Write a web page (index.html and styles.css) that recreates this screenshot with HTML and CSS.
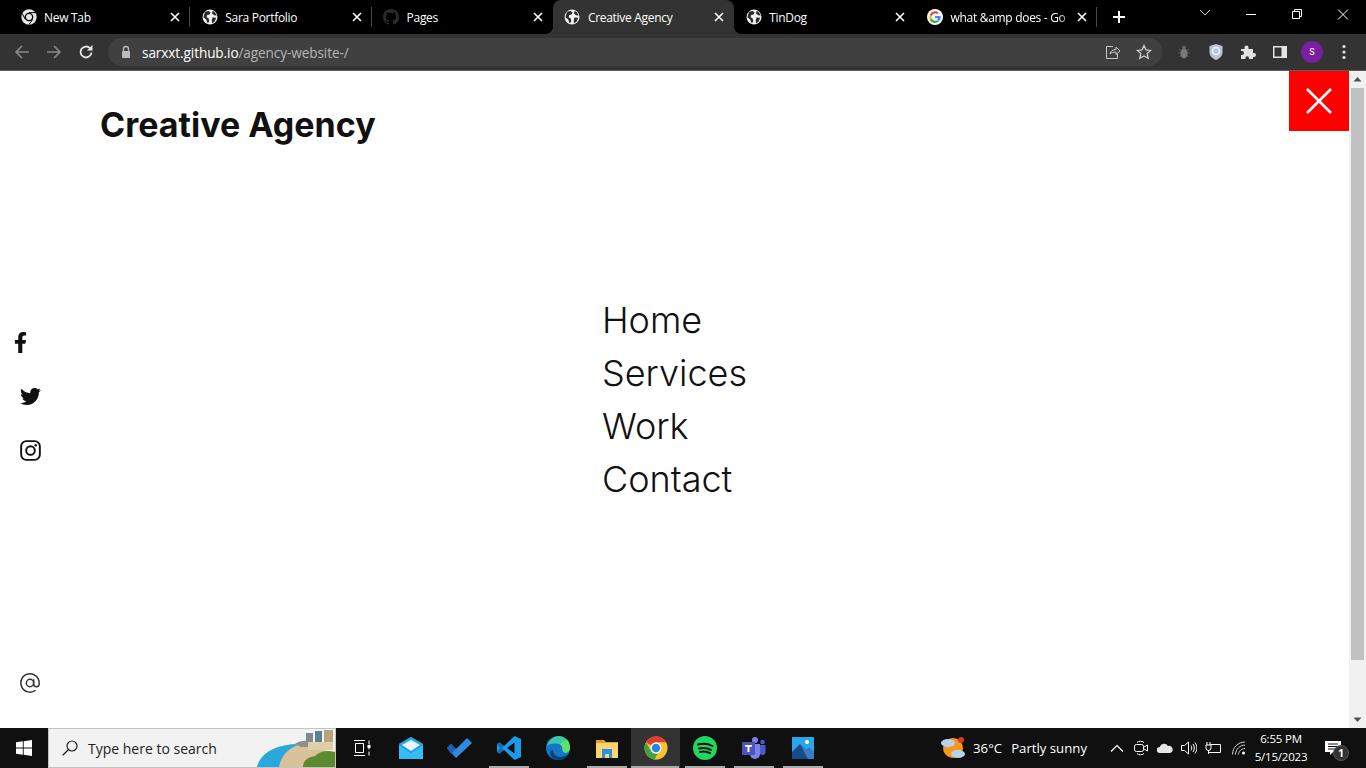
FILE: index.html
```html
<!DOCTYPE html>
<html lang="en">
<head>
  <meta charset="UTF-8" />
  <meta name="viewport" content="width=device-width, initial-scale=1.0" />
  <title>Creative Agency</title>
  <link rel="stylesheet" href="styles.css">
</head>
<body>

<svg class="defs" width="0" height="0">
  <symbol id="globe" viewBox="0 0 16 16">
    <circle cx="8" cy="8" r="7.5" fill="#f1f1f1"/>
    <path d="M3 2.8 6.6 2l2 1.4-1 2-2.4.6-.6 2.2 2.2 1.2.4 3.4-1.6 1.4-1.4-3.6L1.4 8.2z" fill="#2b2b2b"/>
    <path d="M10.6 1.8 13 3.6l1.8 3-2.6-.4-2.2-1.6zM10.4 8.4l3.8.4-1.6 3.6-2.6 2-.2-3z" fill="#2b2b2b"/>
  </symbol>
  <symbol id="x" viewBox="0 0 10 10">
    <path d="M1 1l8 8M9 1l-8 8" stroke="#fff" stroke-width="1.6" fill="none"/>
  </symbol>
  <symbol id="chrome" viewBox="0 0 48 48">
    <circle cx="24" cy="24" r="23" fill="#fbc02d"/>
    <path d="M24 1a23 23 0 0 1 19.9 11.5H24a11.500 11.500 0 0 0-10 5.800L4.100 12.500A23 23 0 0 1 24 1z" fill="#e53935"/>
    <path d="M4.100 12.500 14 29.800A11.500 11.500 0 0 0 27.500 35L21 47A23 23 0 0 1 4.100 12.500z" fill="#43a047"/>
    <circle cx="24" cy="24" r="11" fill="#fff"/>
    <circle cx="24" cy="24" r="8.500" fill="#1e88e5"/>
  </symbol>
</svg>

<div class="tabstrip">
  <div class="tab">
    <svg class="favicon" viewBox="0 0 48 48">
      <circle cx="24" cy="24" r="23" fill="#e8e8e8"/>
      <circle cx="24" cy="24" r="13" fill="#000"/>
      <circle cx="24" cy="24" r="9" fill="#e8e8e8"/>
      <path d="M24 11h20M13 31 3 13M35 31 24 47" stroke="#000" stroke-width="3"/>
    </svg>
    <span class="tab-title">New Tab</span>
    <svg class="tab-close"><use href="#x"/></svg>
  </div>
  <div class="tab">
    <svg class="favicon"><use href="#globe"/></svg>
    <span class="tab-title">Sara Portfolio</span>
    <svg class="tab-close"><use href="#x"/></svg>
  </div>
  <div class="tab no-sep">
    <svg class="favicon" viewBox="0 0 16 16">
      <path fill="#2b2b2b" d="M8 0C3.58 0 0 3.58 0 8c0 3.54 2.29 6.53 5.47 7.59.4.07.55-.17.55-.38 0-.19-.01-.82-.01-1.49-2.01.37-2.53-.49-2.69-.94-.09-.23-.48-.94-.82-1.13-.28-.15-.68-.52-.01-.53.63-.01 1.08.58 1.23.82.72 1.21 1.87.87 2.33.66.07-.52.28-.87.51-1.07-1.78-.2-3.64-.89-3.64-3.95 0-.87.31-1.59.82-2.15-.08-.2-.36-1.02.08-2.12 0 0 .67-.21 2.2.82.64-.18 1.32-.27 2-.27s1.36.09 2 .27c1.53-1.04 2.2-.82 2.2-.82.44 1.1.16 1.92.08 2.12.51.56.82 1.27.82 2.15 0 3.07-1.87 3.75-3.65 3.95.29.25.54.73.54 1.48 0 1.07-.01 1.93-.01 2.2 0 .21.15.46.55.38A8.01 8.01 0 0 0 16 8c0-4.42-3.58-8-8-8z"/>
    </svg>
    <span class="tab-title">Pages</span>
    <svg class="tab-close"><use href="#x"/></svg>
  </div>
  <div class="tab tab-active">
    <svg class="favicon"><use href="#globe"/></svg>
    <span class="tab-title">Creative Agency</span>
    <svg class="tab-close"><use href="#x"/></svg>
  </div>
  <div class="tab no-sep">
    <svg class="favicon"><use href="#globe"/></svg>
    <span class="tab-title">TinDog</span>
    <svg class="tab-close"><use href="#x"/></svg>
  </div>
  <div class="tab">
    <svg class="favicon" viewBox="0 0 48 48">
      <circle cx="24" cy="24" r="24" fill="#fff"/>
      <path d="M41 24.5c0-1.3-.1-2.3-.3-3.4H24v6.400h9.600a8.300 8.300 0 0 1-3.500 5.400l5.400 4.200c3.400-3.100 5.500-7.400 5.500-12.600z" fill="#4285f4"/>
      <path d="M24 42c4.600 0 8.500-1.500 11.500-4.300l-5.400-4.200c-1.500 1-3.500 1.700-6.100 1.700a10.600 10.600 0 0 1-10-7.300l-5.600 4.300A18 18 0 0 0 24 42z" fill="#34a853"/>
      <path d="M14 27.900a11 11 0 0 1 0-7l-5.600-4.300a18 18 0 0 0 0 15.600z" fill="#fbbc05"/>
      <path d="M24 13.100c2.900 0 4.900 1.200 6 2.300l4.800-4.700A17.800 17.800 0 0 0 8.400 16.600l5.600 4.300a10.700 10.700 0 0 1 10-7.800z" fill="#ea4335"/>
    </svg>
    <span class="tab-title tab-fade">what &amp;amp does - Go</span>
    <svg class="tab-close"><use href="#x"/></svg>
  </div>
  <svg class="new-tab" viewBox="0 0 12 12"><path d="M6 0v12M0 6h12" stroke="#fff" stroke-width="2"/></svg>
  <div class="window-btns">
    <svg class="win-btn" viewBox="0 0 46 24"><path d="M18 8l5 5 5-5" stroke="#ccc" fill="none"/></svg>
    <svg class="win-btn" viewBox="0 0 46 24"><path d="M18 12.500h10" stroke="#fff"/></svg>
    <svg class="win-btn" viewBox="0 0 46 24"><path d="M18.500 9.500h7v7h-7zM20.500 9.500v-2h7v7h-2" stroke="#fff" fill="none"/></svg>
    <svg class="win-btn" viewBox="0 0 46 24"><path d="M18 7.500l10 10M28 7.500l-10 10" stroke="#fff" fill="none"/></svg>
  </div>
</div>

<div class="toolbar">
  <button class="tool-btn">
    <svg viewBox="0 0 16 16" width="16" height="16"><path d="M15 8H2M8 2 2 8l6 6" stroke="#8a8a8a" stroke-width="1.6" fill="none"/></svg>
  </button>
  <button class="tool-btn">
    <svg viewBox="0 0 16 16" width="16" height="16"><path d="M1 8h13M8 2l6 6-6 6" stroke="#8a8a8a" stroke-width="1.6" fill="none"/></svg>
  </button>
  <button class="tool-btn">
    <svg viewBox="0 0 16 16" width="16" height="16"><path d="M13.500 8.500A5.500 5.500 0 1 1 12 4.200" stroke="#e8e8e8" stroke-width="1.8" fill="none"/><path d="M14.500 1v5.500H9z" fill="#e8e8e8"/></svg>
  </button>
  <div class="omnibox">
    <svg class="lock" viewBox="0 0 12 14"><path d="M3.500 6V4a2.500 2.500 0 0 1 5 0v2" stroke="#bdbdbd" stroke-width="1.3" fill="none"/><rect x="2" y="6" width="8" height="7" rx="1" fill="#bdbdbd"/></svg>
    <span class="url"><b>sarxxt.github.io</b>/agency-website-/</span>
    <svg class="omni-icon" viewBox="0 0 16 16"><path d="M8 2.500H1.500v12h11V10" stroke="#c8c8c8" fill="none"/><path d="M5 10c.5-3 3-4.500 6-4.500V3l4 4-4 3.500V8c-2.500 0-4.500.5-6 2z" stroke="#c8c8c8" fill="none"/></svg>
    <svg class="omni-icon" viewBox="0 0 16 16"><path d="m8 1.500 2 4.400 4.700.5-3.500 3.200 1 4.700L8 12l-4.200 2.300 1-4.700-3.500-3.200 4.700-.5z" stroke="#d0d0d0" stroke-width="1.3" fill="none"/></svg>
  </div>
  <button class="tool-btn">
    <svg viewBox="0 0 16 16" width="16" height="16"><path d="M3 5l2 1.500M13 5l-2 1.500M2.500 9h2.500M13.500 9H11M3 13l2-1.500M13 13l-2-1.500" stroke="#5a5a5a"/><ellipse cx="8" cy="9.500" rx="3.500" ry="5" fill="#7b7b7b"/><circle cx="8" cy="3.500" r="2" fill="#666"/></svg>
  </button>
  <button class="tool-btn">
    <svg viewBox="0 0 16 18" width="16" height="18"><path d="M8 1l6.500 2v6c0 4-3 6.500-6.500 8-3.500-1.500-6.500-4-6.500-8V3z" fill="#b9c3d2"/><circle cx="8" cy="8" r="3.500" fill="none" stroke="#eef1f5" stroke-width="1.5"/></svg>
  </button>
  <button class="tool-btn">
    <svg viewBox="0 0 16 16" width="16" height="16"><path d="M1 5h3.500V3.500a2 2 0 0 1 4 0V5H13v4h1a2 2 0 0 1 0 4h-1v2H9v-1a1.800 1.800 0 0 0-3.600 0v1H1v-4h1a2 2 0 0 0 0-4H1z" fill="#e3e3e3"/></svg>
  </button>
  <button class="tool-btn">
    <svg viewBox="0 0 14 12" width="14" height="12"><rect width="14" height="12" fill="#e3e3e3"/><rect x="1.500" y="1.500" width="7" height="9" fill="#333"/></svg>
  </button>
  <button class="tool-btn"><span class="avatar">S</span></button>
  <button class="tool-btn">
    <svg viewBox="0 0 4 16" width="4" height="16"><circle cx="2" cy="2.500" r="1.600" fill="#e3e3e3"/><circle cx="2" cy="8" r="1.600" fill="#e3e3e3"/><circle cx="2" cy="13.500" r="1.600" fill="#e3e3e3"/></svg>
  </button>
</div>

<div class="viewport">
  <div class="page">
    <h1 class="logo">Creative Agency</h1>

    <div class="social">
      <svg class="social-f" viewBox="0 0 320 512"><path d="M279.14 288l14.22-92.66h-88.91v-60.13c0-25.35 12.42-50.06 52.24-50.06h40.42V6.26S260.43 0 225.36 0c-73.22 0-121.08 44.38-121.08 124.72v70.62H22.89V288h81.39v224h100.17V288z"/></svg>
      <svg class="social-icon" viewBox="0 0 512 512"><path d="M459.37 151.716c.325 4.548.325 9.097.325 13.645 0 138.72-105.583 298.558-298.558 298.558-59.452 0-114.68-17.219-161.137-47.106 8.447.974 16.568 1.299 25.34 1.299 49.055 0 94.213-16.568 130.274-44.832-46.132-.975-84.792-31.188-98.112-72.772 6.498.974 12.995 1.624 19.818 1.624 9.421 0 18.843-1.3 27.614-3.573-48.081-9.747-84.143-51.98-84.143-102.985v-1.299c13.969 7.797 30.214 12.67 47.431 13.319-28.264-18.843-46.781-51.005-46.781-87.391 0-19.492 5.197-37.36 14.294-52.954 51.655 63.675 129.3 105.258 216.365 109.807-1.624-7.797-2.599-15.918-2.599-24.04 0-57.828 46.782-104.934 104.934-104.934 30.213 0 57.502 12.67 76.67 33.137 23.715-4.548 46.456-13.32 66.599-25.34-7.798 24.366-24.366 44.833-46.132 57.827 21.117-2.273 41.584-8.122 60.426-16.243-14.292 20.791-32.161 39.308-52.628 54.253z"/></svg>
      <svg class="social-icon" viewBox="0 0 22 22"><rect x="1.200" y="1.200" width="19.600" height="19.600" rx="5.500" fill="none" stroke="#111" stroke-width="2"/><circle cx="11" cy="11" r="4.500" fill="none" stroke="#111" stroke-width="2"/><circle cx="16.500" cy="5.500" r="1.300" fill="#111"/></svg>
    </div>

    <nav class="menu">
      <a href="#">Home</a>
      <a href="#">Services</a>
      <a href="#">Work</a>
      <a href="#">Contact</a>
    </nav>

    <svg class="mail-at" viewBox="0 0 24 24"><circle cx="12" cy="12" r="4" fill="none" stroke="#333" stroke-width="1.6"/><path d="M16 8v5a3 3 0 0 0 6 0v-1a10 10 0 1 0-3.920 7.940" fill="none" stroke="#333" stroke-width="1.6"/></svg>

    <a class="close-btn" href="#">
      <svg viewBox="0 0 26 26" width="26" height="26"><path d="M1 1l24 24M25 1 1 25" stroke="#fff" stroke-width="2.6"/></svg>
    </a>
  </div>

  <div class="scrollbar">
    <svg class="arrow" viewBox="0 0 17 17"><path d="M4.500 10.500 8.500 6l4 4.500z" fill="#505050"/></svg>
    <div class="thumb-track"><div class="thumb"></div></div>
    <svg class="arrow" viewBox="0 0 17 17"><path d="M4.500 6.500 8.500 11l4-4.500z" fill="#505050"/></svg>
  </div>
</div>

<div class="taskbar">
  <div class="start">
    <svg viewBox="0 0 16 16" width="16" height="16"><path d="M0 2.300 6.800 1.300v6.300H0zM7.700 1.200 16 0v7.600H7.700zM0 8.400h6.800v6.300L0 13.700zM7.700 8.400H16V16l-8.300-1.200z" fill="#fff"/></svg>
  </div>
  <div class="search">
    <svg class="search-icon" viewBox="0 0 16 16"><circle cx="10" cy="6" r="5" fill="none" stroke="#222" stroke-width="1.2"/><path d="M6.300 9.700.8 15.200" stroke="#222" stroke-width="1.3"/></svg>
    <span>Type here to search</span>
    <svg class="beach" viewBox="0 0 80 38">
      <path d="M2 38C6 24 20 15 46 15L80 24V38z" fill="#d9c29a"/>
      <path d="M2 38C6 24 20 15 46 15 32 19 26 28 24 38z" fill="#29a8dc"/>
      <path d="M40 15c5-4 12-4 18-2v5H46z" fill="#8b8f86"/>
      <rect x="51" y="4" width="7" height="9" fill="#7d8a94"/>
      <rect x="60" y="2" width="7" height="11" fill="#5d7f92"/>
      <rect x="69" y="1" width="9" height="12" fill="#b9a27e"/>
      <rect x="53" y="13" width="25" height="8" fill="#e0cfa6"/>
      <path d="M48 38c0-7 6-10 12-11 5-5 12-6 20-4v15z" fill="#5e8a2f"/>
    </svg>
  </div>
  <div class="task-item">
    <svg viewBox="0 0 18 16" width="18" height="16"><path d="M1 .5h11M1 15.500h11M2.500 3.500h8v9h-8zM16 .5v4M16 6.500v3M16 11.500v4" stroke="#fff" fill="none"/><rect x="14.500" y="5" width="3" height="3" fill="#fff"/></svg>
  </div>
  <div class="task-item">
    <svg viewBox="0 0 24 22" width="24" height="22"><path d="M0 7 12 0l12 7v15H0z" fill="#1490df"/><path d="M0 7l12 8 12-8L12 0z" fill="#28a8ea"/><path d="M0 8l12 8 12-8v14H0z" fill="#50d9ff" opacity=".6"/><path d="M3 8l9 6 9-6-9-5z" fill="#fff" opacity=".9"/></svg>
  </div>
  <div class="task-item">
    <svg viewBox="0 0 26 20" width="26" height="20"><path d="M0 10l4-4 5 5L20 0l5 5L9 20z" fill="#2f8ae0"/><path d="M0 10l4-4 5 5-5 5z" fill="#1b5fb8"/></svg>
  </div>
  <div class="task-item running">
    <svg viewBox="0 0 24 24" width="24" height="24"><path d="M17.500 0 24 3v18l-6.500 3L7 14l-4.500 3.500L0 16V8l2.500-1.500L7 10z" fill="#1e9be8"/><path d="M17.500 6.500 10 12l7.500 5.500z" fill="#101010"/><path d="M0 8l2.500-1.500L7 10 4.500 12 7 14l-4.500 3.500L0 16l3-4z" fill="#0f6cb5"/></svg>
  </div>
  <div class="task-item">
    <svg viewBox="0 0 24 24" width="24" height="24"><circle cx="12" cy="12" r="12" fill="#1277c4"/><path d="M1 10C3 3 9 0 13 0c6 0 11 5 11 12 0 2-1 4-3 4.500-3 .5-4.500-.5-4.500-3 0-4-3-6-6.500-6C6 7.500 3 8 1 10z" fill="#3ac9a4"/><path d="M21 3.500c2 2 3 5 3 8.500 0 2-1 4-3 4.500-3 .5-4.500-.5-4.500-3 0-3-1-4.500-3-5.500 2-1.500 5-3 7.500-4.500z" fill="#5fe06c"/><path d="M7 14c0 4 3 7 7 7 3 0 6-1 8-3-2 4-6 6-10 6-5 0-8-4-8-8 0-1 1-2 3-2z" fill="#0c3f7a"/></svg>
  </div>
  <div class="task-item running">
    <svg viewBox="0 0 22 20" width="22" height="20"><path d="M0 2h8l2 2h12v2H0z" fill="#e4a11b"/><path d="M0 5h22v15H0z" fill="#f7d774"/><path d="M6 11h10v9h-3v-4H9v4H6z" fill="#2f8ee0"/></svg>
  </div>
  <div class="task-item running active">
    <svg width="24" height="24"><use href="#chrome"/></svg>
  </div>
  <div class="task-item running">
    <svg viewBox="0 0 24 24" width="24" height="24"><circle cx="12" cy="12" r="12" fill="#1ed760"/><path d="M5 8.500c5-1.500 10-1 14.500 1.500M6 12.500c4-1 8.500-.7 12 1.500M7 16c3.500-.8 7-.5 10 1.200" stroke="#101010" stroke-width="2" stroke-linecap="round" fill="none"/></svg>
  </div>
  <div class="task-item running">
    <svg viewBox="0 0 24 24" width="24" height="24"><circle cx="13" cy="4" r="3" fill="#7b83eb"/><circle cx="20.500" cy="6" r="2.300" fill="#5059c9"/><path d="M17 9h6.500v7a3 3 0 0 1-6 0z" fill="#5059c9"/><path d="M8 8h10v10a5 5 0 0 1-10 0z" fill="#7b83eb"/><rect y="6" width="13" height="13" rx="1" fill="#4b53bc"/><path d="M3 9h7v1.800H7.500V16h-2v-5.200H3z" fill="#fff"/></svg>
  </div>
  <div class="task-item running">
    <svg viewBox="0 0 22 22" width="22" height="22"><rect width="22" height="22" fill="#28a8ea"/><path d="M0 15 8 7l6 6 3-2 5 4v7H0z" fill="#1b4a8a"/><path d="M8 7l6 6 3-2 5 4v7h-6z" fill="#3c7cc4"/><circle cx="15" cy="5" r="2" fill="#fff"/></svg>
  </div>

  <div class="tray">
    <div class="weather">
      <svg viewBox="0 0 26 24" width="26" height="24"><circle cx="13" cy="12" r="10" fill="#f39a1e"/><circle cx="21" cy="4" r="3" fill="#d93a2b"/><ellipse cx="8" cy="7" rx="7" ry="4" fill="#b7d3ec"/><ellipse cx="18" cy="18" rx="7" ry="4" fill="#b7d3ec"/></svg>
      <span class="temp">36°C</span>
      <span>Partly sunny</span>
    </div>
    <div class="tray-icon">
      <svg viewBox="0 0 14 8" width="14" height="8"><path d="M1 7.500 7 1.500l6 6" stroke="#fff" stroke-width="1.2" fill="none"/></svg>
    </div>
    <div class="tray-icon">
      <svg viewBox="0 0 14 16" width="14" height="16"><path d="M3 2.500C5 .8 8 .8 10 2.500M3 13.500c2 1.700 5 1.700 7 0" stroke="#fff" fill="none"/><rect x=".5" y="4.500" width="9" height="7" rx="2" stroke="#fff" fill="none"/><path d="M10 7l3.500-2v6L10 9" stroke="#fff" fill="none"/></svg>
    </div>
    <div class="tray-icon">
      <svg viewBox="0 0 16 10" width="16" height="10"><path d="M3 10a3 3 0 0 1-.3-6A4.500 4.500 0 0 1 11 3a3.500 3.500 0 0 1 2 7z" fill="#e6e6e6"/></svg>
    </div>
    <div class="tray-icon">
      <svg viewBox="0 0 16 14" width="16" height="14"><path d="M.5 4.500h3L7.500 1v12l-4-3.500h-3zM10 4.500c1 1.500 1 3.500 0 5M12 3c1.800 2.500 1.800 5.500 0 8M14 1.500c2.500 3.500 2.500 7.500 0 11" stroke="#fff" fill="none"/></svg>
    </div>
    <div class="tray-icon">
      <svg viewBox="0 0 16 12" width="16" height="12"><path d="M5.500 2.500H15.500V10.500H5.500M7 10.500H3" stroke="#fff" fill="none"/><path d="M2 0v3M5 0v3M1 3h5v3a2.500 2.500 0 0 1-5 0zM3.500 8v4" stroke="#fff" fill="none"/></svg>
    </div>
    <div class="tray-icon wifi">
      <svg viewBox="0 0 14 14" width="14" height="14"><path d="M.5 13.500C.5 6.500 6 1 13 1M3.500 13.500C3.500 8.500 8 4 13 4M6.500 13.500C6.500 10.500 9.500 7.500 13 7.500" stroke="#cfcfcf" fill="none"/><circle cx="11.500" cy="12" r="1.500" fill="#fff"/></svg>
    </div>
    <div class="clock">
      <span>6:55 PM</span>
      <span>5/15/2023</span>
    </div>
    <div class="notify">
      <svg viewBox="0 0 16 14" width="16" height="14"><path d="M0 0h16v11H8l-3 3v-3H0z" fill="#fff"/><path d="M3 3h10M3 5.500h10M3 8h7" stroke="#101010"/></svg>
      <span class="notify-count">1</span>
    </div>
  </div>
</div>

</body>
</html>
```

FILE: styles.css
```css
* {
  box-sizing: border-box;
}

body {
  margin: 0;
  height: 768px;
  overflow: hidden;
  display: flex;
  flex-direction: column;
  font-family: 'Open Sans', sans-serif;
  background: #fff;
}

.defs {
  position: absolute;
}

/* browser tabs */
.tabstrip {
  height: 34px;
  flex: none;
  display: flex;
  padding-left: 9px;
  background: #000;
  color: #fff;
}

.tab {
  width: 181.3px;
  height: 34px;
  flex: none;
  position: relative;
  display: flex;
  align-items: center;
  padding-left: 11.5px;
}

.tab::after {
  content: '';
  width: 1px;
  height: 20px;
  margin-left: 9px;
  background: #4a4a4a;
}

.tab.no-sep::after {
  background: none;
}

.tab-active {
  background: #333;
  border-radius: 8px 8px 0 0;
}

.tab-active .tab-close {
  margin-right: 10px;
}

/* flared bottom corners of the open tab */
.tab-active::before,
.tab-active::after {
  content: '';
  position: absolute;
  bottom: 0;
  width: 8px;
  height: 8px;
  margin: 0;
  background: radial-gradient(circle at 0 0, transparent 8px, #333 8px);
}

.tab-active::before {
  left: -8px;
}

.tab-active::after {
  right: -8px;
  background: radial-gradient(circle at 100% 0, transparent 8px, #333 8px);
}

.favicon {
  width: 16px;
  height: 16px;
  flex: none;
}

.tab-title {
  flex: 1;
  margin-left: 7.5px;
  font-size: 12px;
  letter-spacing: -0.3px;
  white-space: nowrap;
  overflow: hidden;
}

.tab-fade {
  -webkit-mask-image: linear-gradient(to right, #000 85%, transparent);
  mask-image: linear-gradient(to right, #000 85%, transparent);
}

.tab-close {
  width: 10px;
  height: 10px;
  flex: none;
}

.new-tab {
  width: 12px;
  height: 12px;
  margin: 11px 0 0 16px;
}

.window-btns {
  margin-left: auto;
  display: flex;
}

.win-btn {
  width: 46px;
  height: 26px;
  margin-top: 1px;
}

/* address bar */
.toolbar {
  height: 37px;
  flex: none;
  display: flex;
  align-items: center;
  padding: 0 6px;
  background: #333;
  border-bottom: 1px solid #5c5c5c;
}

.tool-btn {
  width: 32px;
  height: 28px;
  flex: none;
  display: flex;
  align-items: center;
  justify-content: center;
  padding: 0;
  border: none;
  background: none;
}

.omnibox {
  flex: 1;
  height: 28px;
  margin: 0 6px;
  display: flex;
  align-items: center;
  padding: 0 10px 0 12px;
  border-radius: 14px;
  background: #404040;
}

.lock {
  width: 12px;
  height: 14px;
}

.url {
  flex: 1;
  margin-left: 10px;
  font-size: 13.6px;
  letter-spacing: -0.1px;
  color: #b5b5b5;
}

.url b {
  font-weight: 500;
  color: #fff;
}

.omni-icon {
  width: 16px;
  height: 16px;
  margin-left: 15px;
}

.avatar {
  width: 22px;
  height: 22px;
  display: flex;
  align-items: center;
  justify-content: center;
  border-radius: 50%;
  background: #7a1fa2;
  color: #fff;
  font-size: 9px;
  font-family: 'Roboto', sans-serif;
}

/* the site itself */
.viewport {
  flex: 1;
  min-height: 0;
  display: flex;
}

.page {
  flex: 1;
  position: relative;
  display: grid;
  grid-template-columns: 1fr auto 1fr;
  grid-template-rows: 1fr auto 1fr;
  font-family: 'Inter', sans-serif;
  color: #111;
}

.logo {
  grid-column: 1 / 4;
  margin: 31px 0 0 100px;
  font-size: 34px;
  font-weight: 700;
  line-height: 46px;
}

.social {
  grid-column: 1;
  grid-row: 2;
  align-self: end;
  display: flex;
  flex-direction: column;
  align-items: flex-start;
  gap: 33px;
  margin-bottom: 45px;
  padding-left: 20px;
}

.social-icon,
.social-f {
  width: 21px;
  height: 21px;
  fill: #111;
}

.social-f {
  margin-left: -10px;
}

.menu {
  grid-column: 2;
  grid-row: 2;
  display: flex;
  flex-direction: column;
}

.menu a {
  font-size: 36px;
  font-weight: 300;
  line-height: 53px;
  color: #111;
  text-decoration: none;
}

.mail-at {
  grid-column: 1;
  grid-row: 3;
  align-self: end;
  width: 22px;
  height: 22px;
  margin: 0 0 34px 19px;
}

.close-btn {
  position: absolute;
  top: 0;
  right: 0;
  width: 60px;
  height: 60px;
  display: flex;
  align-items: center;
  justify-content: center;
  background: #f00;
}

.scrollbar {
  width: 17px;
  flex: none;
  display: flex;
  flex-direction: column;
  background: #f1f1f1;
}

.arrow {
  width: 17px;
  height: 17px;
  flex: none;
}

.thumb-track {
  flex: 1;
  padding: 0 2px;
}

.thumb {
  height: 572px;
  background: #c1c1c1;
}

/* windows taskbar */
.taskbar {
  height: 40px;
  flex: none;
  display: flex;
  background: #101010;
  color: #fff;
}

.start {
  width: 48px;
  display: flex;
  align-items: center;
  justify-content: center;
}

.search {
  width: 288px;
  margin-right: 1px;
  position: relative;
  display: flex;
  align-items: center;
  padding-left: 13px;
  overflow: hidden;
  background: #f2f2f2;
  border: 1px solid #c4c4c4;
  font-size: 14px;
  color: #222;
}

.search-icon {
  width: 16px;
  height: 16px;
  margin-right: 10px;
}

.beach {
  position: absolute;
  right: 0;
  bottom: 0;
  width: 80px;
  height: 38px;
}

.task-item {
  width: 49px;
  position: relative;
  display: flex;
  align-items: center;
  justify-content: center;
}

.task-item.running::after {
  content: '';
  position: absolute;
  left: 4.5px;
  right: 4.5px;
  bottom: 0;
  height: 2px;
  background: #aaa;
}

.task-item.active {
  background: #333;
}

.task-item.active::after {
  left: 0;
  right: 1px;
}

.tray {
  margin-left: auto;
  display: flex;
  align-items: center;
  padding-right: 9px;
}

.weather {
  display: flex;
  align-items: center;
  margin-right: 18px;
  font-size: 13.2px;
}

.temp {
  margin: 0 9px 0 7px;
}

.tray-icon {
  width: 24px;
  display: flex;
  justify-content: center;
}

.tray-icon.wifi {
  width: 28px;
}

.clock {
  width: 56px;
  display: flex;
  flex-direction: column;
  align-items: center;
  font-size: 11.5px;
  letter-spacing: -0.2px;
  line-height: 18px;
}

.notify {
  width: 48px;
  position: relative;
  display: flex;
  justify-content: center;
}

.notify-count {
  position: absolute;
  top: 4px;
  right: 8px;
  width: 16px;
  height: 16px;
  display: flex;
  align-items: center;
  justify-content: center;
  border-radius: 50%;
  border: 1px solid #555;
  background: #333;
  font-size: 10px;
  font-weight: 700;
}
```
